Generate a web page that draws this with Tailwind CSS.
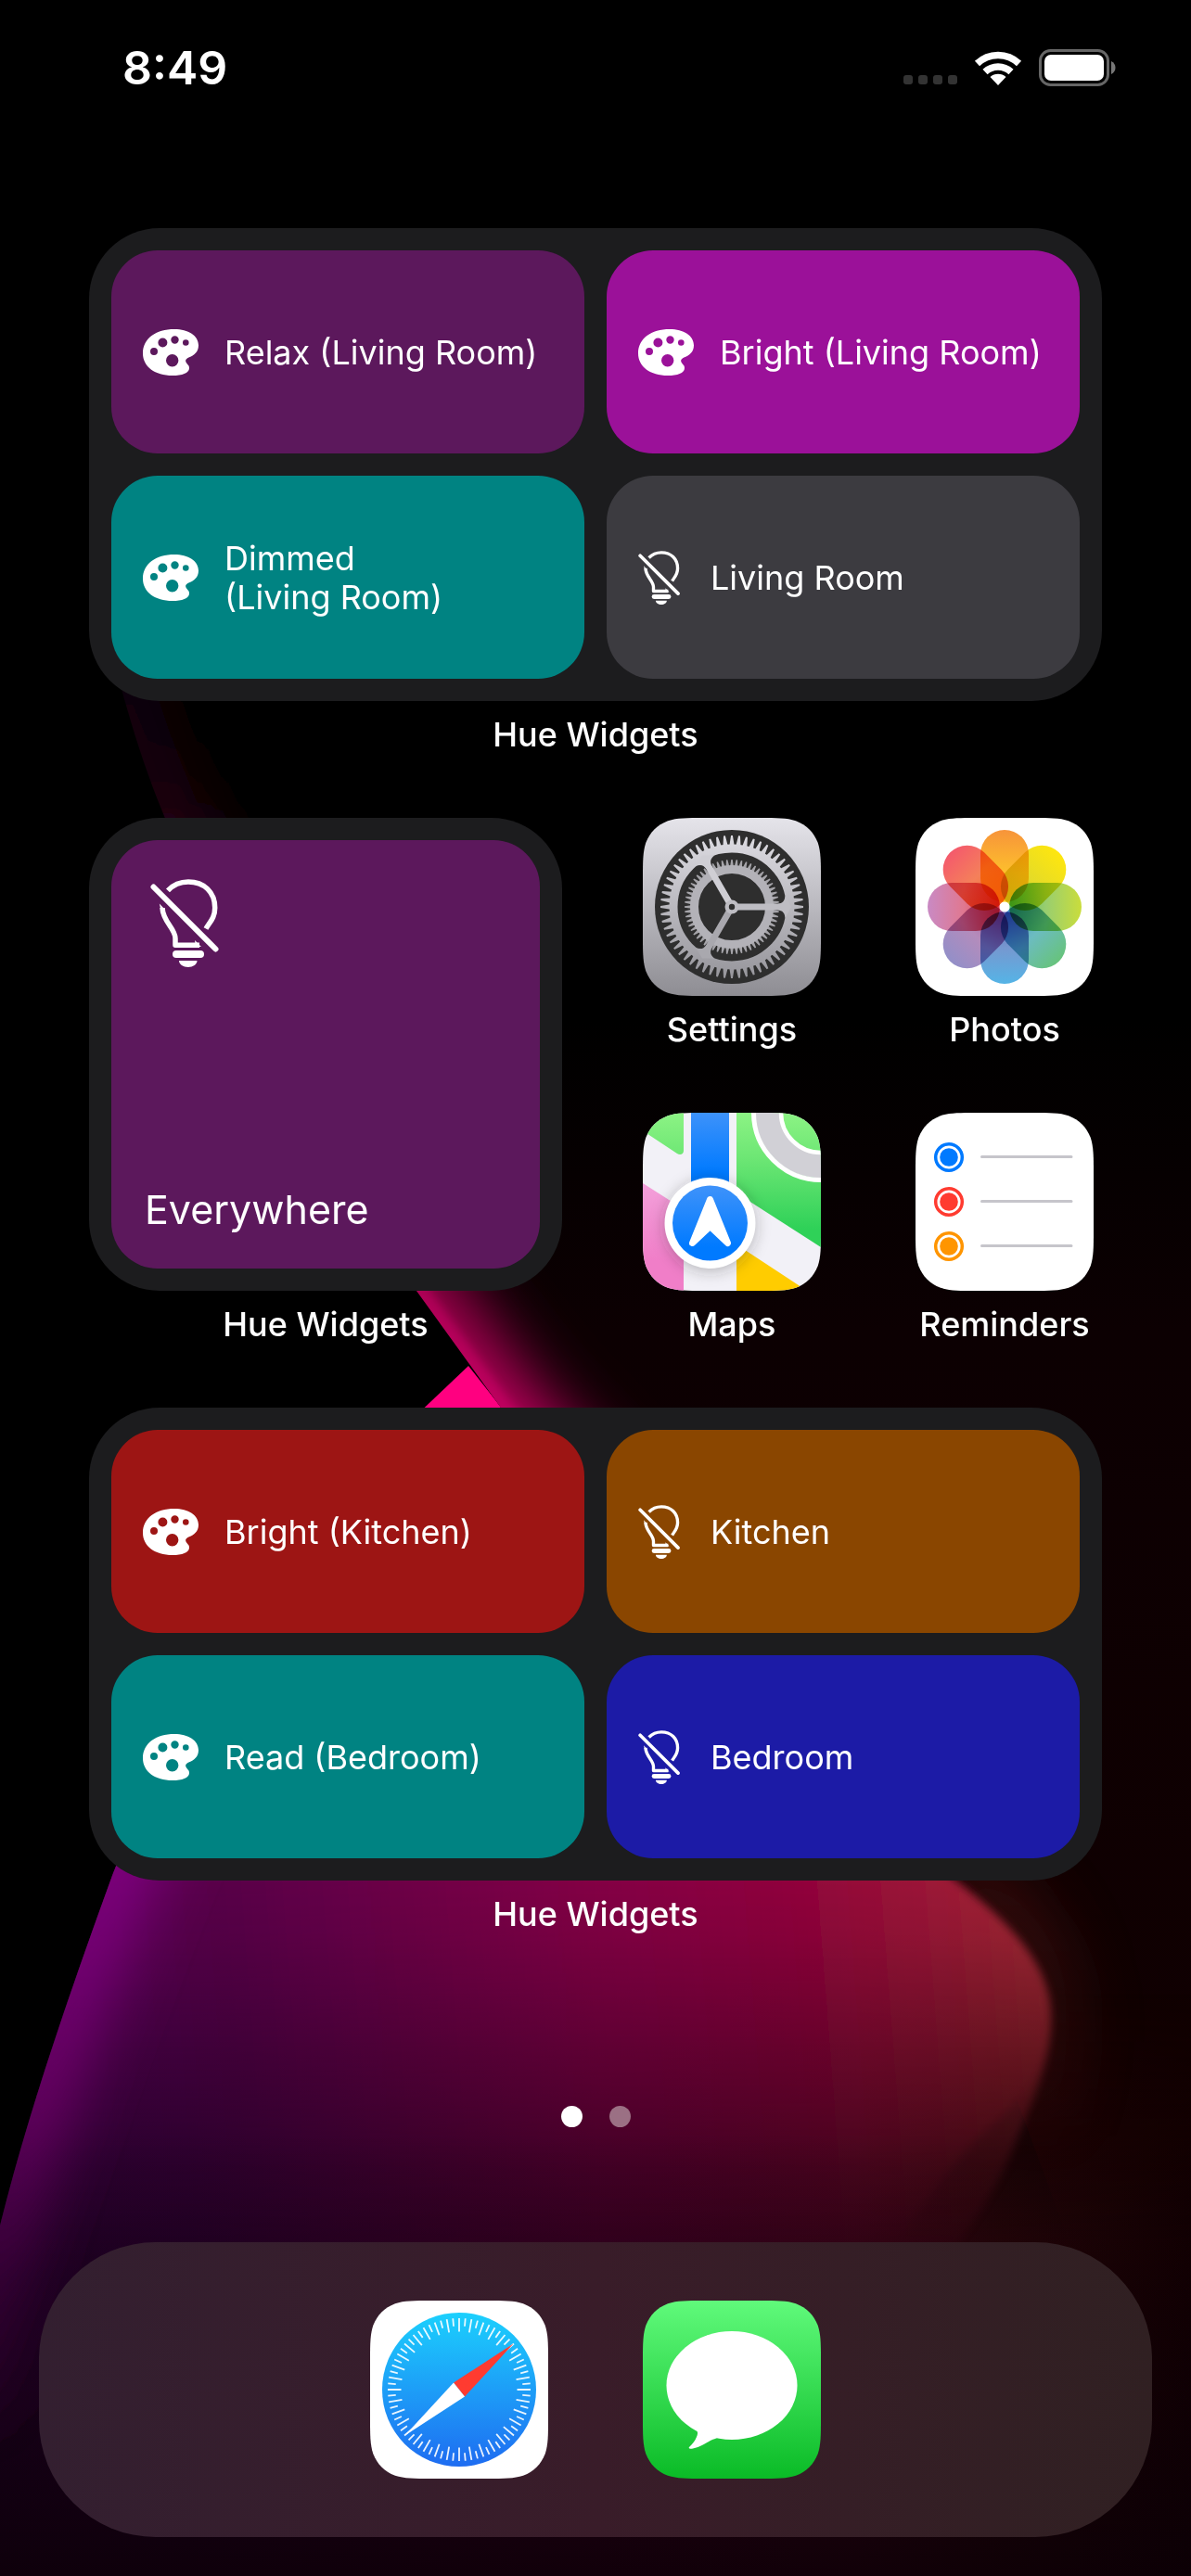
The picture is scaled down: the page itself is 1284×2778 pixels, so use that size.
<!DOCTYPE html>
<html lang="en">
<head>
    <meta charset="UTF-8">
    <meta name="viewport" content="width=device-width, initial-scale=1.0">
    <title>Home Screen</title>
    <script src="https://cdn.jsdelivr.net/npm/@tailwindcss/browser@4"></script>
</head>
<body class="bg-black text-white font-['Inter','Liberation_Sans',sans-serif]">

    <!-- Shared icons -->
    <svg class="absolute size-0" aria-hidden="true">
        <symbol id="palette" viewBox="0 0 60 50">
            <path fill="currentColor" fill-rule="evenodd" d="M34 0C49 0 60 7 60 17.5C60 25 55 28 50 30.3C47 31.8 45.5 33 46.5 35.5C47.5 38 50 38.5 50 42C50 47.500 42 50 32 50C13 50 0 40.500 0 26C0 10 14 0 34 0ZM25 33.700a6.700 6.700 0 1 0 13.400 0a6.700 6.700 0 1 0 -13.400 0ZM8 24a4 4 0 1 0 8 0a4 4 0 1 0 -8 0ZM16.400 14.500a5 5 0 1 0 10 0a5 5 0 1 0 -10 0ZM30.300 11.500a4.200 4.200 0 1 0 8.400 0a4.200 4.200 0 1 0 -8.400 0ZM43 14.500a3.300 3.300 0 1 0 6.600 0a3.300 3.300 0 1 0 -6.600 0Z"/>
        </symbol>
        <symbol id="bulb-off" viewBox="0 0 74 95" preserveAspectRatio="xMinYMid">
            <g fill="none" stroke="currentColor" stroke-width="5.500">
                <path stroke-width="6" stroke-linecap="round" d="M3.500 8.500L70.500 75.500"/>
                <path d="M19 12.300C25 6 32 3 41 3C58 3 69.700 14 69.700 31C69.700 42 64 46.500 60 53.500"/>
                <path stroke-linejoin="round" d="M13 31C13.500 46 27 53 27 64V71.200H53"/>
            </g>
            <path fill="currentColor" d="M9.800 26.500L16 33L12 36ZM48 66L55 73H49Z"/>
            <rect x="24" y="77" width="34" height="8" rx="4" fill="currentColor"/>
            <path fill="currentColor" d="M31 88H50.500C50.500 92 46 95 40.800 95S31 92 31 88Z"/>
        </symbol>
        <clipPath id="squircle">
            <path d="M66 0H126C145 0 155 0 165 3.200C177 8 184 15 188.800 27C192 37 192 47 192 66V126C192 145 192 155 188.800 165C184 177 177 184 165 188.800C155 192 145 192 126 192H66C47 192 37 192 27 188.800C15 184 8 177 3.200 165C0 155 0 145 0 126V66C0 47 0 37 3.200 27C8 15 15 8 27 3.200C37 0 47 0 66 0Z"/>
        </clipPath>
    </svg>

    <div class="relative isolate flex min-h-screen flex-col overflow-hidden">

        <!-- Wallpaper -->
        <svg class="absolute inset-0 -z-10 h-full w-full" viewBox="0 0 1284 2778" preserveAspectRatio="none" aria-hidden="true">
            <defs>
                <linearGradient id="back" x1="0" y1="1100" x2="0" y2="2778" gradientUnits="userSpaceOnUse">
                    <stop offset="0" stop-color="#000"/>
                    <stop offset=".2" stop-color="#0c0002"/>
                    <stop offset="1" stop-color="#130001"/>
                </linearGradient>
                <linearGradient id="ridge" x1="0" y1="640" x2="0" y2="1560" gradientUnits="userSpaceOnUse">
                    <stop offset="0" stop-color="#000"/>
                    <stop offset=".26" stop-color="#240012"/>
                    <stop offset=".82" stop-color="#b00056"/>
                    <stop offset="1" stop-color="#d8006c"/>
                </linearGradient>
                <linearGradient id="front" x1="100" y1="2100" x2="1130" y2="2020" gradientUnits="userSpaceOnUse">
                    <stop offset="0" stop-color="#5e0058"/>
                    <stop offset=".13" stop-color="#5e004e"/>
                    <stop offset=".52" stop-color="#8c004a"/>
                    <stop offset=".72" stop-color="#9a0042"/>
                    <stop offset=".84" stop-color="#a6143c"/>
                    <stop offset="1" stop-color="#b4303a"/>
                </linearGradient>
                <linearGradient id="floor" x1="0" y1="0" x2="1284" y2="0" gradientUnits="userSpaceOnUse">
                    <stop offset="0" stop-color="#200028"/>
                    <stop offset=".16" stop-color="#220026"/>
                    <stop offset=".5" stop-color="#360020"/>
                    <stop offset=".72" stop-color="#360416"/>
                    <stop offset=".84" stop-color="#260508"/>
                    <stop offset="1" stop-color="#130001"/>
                </linearGradient>
                <linearGradient id="shade" x1="0" y1="2300" x2="0" y2="2778" gradientUnits="userSpaceOnUse">
                    <stop offset="0" stop-color="#0b0008" stop-opacity="0"/>
                    <stop offset="1" stop-color="#0b0006" stop-opacity=".85"/>
                </linearGradient>
                <linearGradient id="rim" x1="0" y1="2000" x2="0" y2="2778" gradientUnits="userSpaceOnUse">
                    <stop offset="0" stop-color="#8c0090"/>
                    <stop offset=".35" stop-color="#74006e"/>
                    <stop offset=".6" stop-color="#3c003a"/>
                    <stop offset="1" stop-color="#100010"/>
                </linearGradient>
                <linearGradient id="fadeDown" x1="0" y1="1960" x2="0" y2="2460" gradientUnits="userSpaceOnUse">
                    <stop offset="0" stop-color="#fff"/>
                    <stop offset=".25" stop-color="#ccc"/>
                    <stop offset=".5" stop-color="#7a7a7a"/>
                    <stop offset=".75" stop-color="#2c2c2c"/>
                    <stop offset="1" stop-color="#000"/>
                </linearGradient>
                <linearGradient id="fadeUp" x1="0" y1="2150" x2="0" y2="2420" gradientUnits="userSpaceOnUse">
                    <stop offset="0" stop-color="#000"/>
                    <stop offset="1" stop-color="#fff"/>
                </linearGradient>
                <mask id="fadeMask" maskUnits="userSpaceOnUse" x="0" y="0" width="1284" height="2778">
                    <rect width="1284" height="2778" fill="url(#fadeDown)"/>
                </mask>
                <mask id="floorMask" maskUnits="userSpaceOnUse" x="0" y="0" width="1284" height="2778">
                    <rect width="1284" height="2778" fill="url(#fadeUp)"/>
                    <path d="M-100 1850V2600H850C960 2420 1020 2340 1060 2300C1110 2260 1133 2220 1133 2175C1133 2120 1090 2075 1030 2028L800 1850Z" fill="#fff" filter="url(#blurSmall)"/>
                </mask>
                <filter id="blurSmall" filterUnits="userSpaceOnUse" x="-200" y="0" width="1700" height="3000"><feGaussianBlur stdDeviation="5"/></filter>
                <filter id="blurLarge" filterUnits="userSpaceOnUse" x="-200" y="0" width="1700" height="3000"><feGaussianBlur stdDeviation="36"/></filter>
                <clipPath id="backClip"><path d="M85 540C115 690 140 790 175 875C260 1090 350 1240 449 1392L540 1518L1000 2000L1284 2778V540Z"/></clipPath>
                <clipPath id="frontClip"><path d="M122 2020C60 2190 25 2300 0 2400V2778H1284V1900H170Z"/></clipPath>
            </defs>
            <rect width="1284" height="2778" fill="#000"/>
            <path d="M505 1473L550 1530H445Z" fill="#ff0080"/>
            <g clip-path="url(#backClip)">
                <path d="M0 540H1284V2778H0Z" fill="url(#back)"/>
                <path d="M75 540C105 690 135 790 170 875C255 1090 345 1240 444 1392L540 1525L700 1700" fill="none" stroke="url(#ridge)" stroke-width="84" filter="url(#blurLarge)"/>
                <path d="M400 1330L449 1392L540 1518L700 1700" fill="none" stroke="#ff0080" stroke-opacity=".3" stroke-width="24" filter="url(#blurSmall)"/>
            </g>
            <path d="M1000 2000L1284 2778V1990Z" fill="url(#back)"/>
            <g clip-path="url(#frontClip)">
                <rect y="1900" width="1284" height="878" fill="url(#floor)" mask="url(#floorMask)"/>
                <g mask="url(#fadeMask)">
                    <path d="M1020 2015C1110 2080 1150 2130 1110 2290" fill="none" stroke="#c83c3c" stroke-opacity=".3" stroke-width="60" filter="url(#blurLarge)"/>
                    <path d="M-100 1850V2600H900C1000 2460 1060 2400 1095 2310C1120 2250 1133 2220 1133 2175C1133 2120 1090 2075 1030 2028L800 1850Z" fill="url(#front)" filter="url(#blurSmall)"/>
                </g>
                <rect y="2300" width="1284" height="478" fill="url(#shade)"/>
                <path d="M160 1930L125 2015C60 2190 25 2300 0 2400L-40 2600" fill="none" stroke="url(#rim)" stroke-width="64" filter="url(#blurLarge)"/>
            </g>
        </svg>

        <!-- Status bar -->
        <header class="flex items-center justify-between pt-10 pr-20 pl-[132px]">
            <time class="text-[50px] leading-[66px] font-semibold">8:49</time>
            <div class="flex items-center gap-[18px]">
                <div class="flex gap-[6px] pt-[26px]">
                    <span class="size-[10px] rounded-[3px] bg-[#333]"></span>
                    <span class="size-[10px] rounded-[3px] bg-[#333]"></span>
                    <span class="size-[10px] rounded-[3px] bg-[#333]"></span>
                    <span class="size-[10px] rounded-[3px] bg-[#333]"></span>
                </div>
                <svg class="h-[38px] w-[52px]" viewBox="0 0 52 38" role="img" aria-label="Wi-Fi">
                    <g fill="none" stroke="#fff" stroke-width="7.500">
                        <path d="M3.500 14.500A32.500 32.500 0 0 1 48.500 14.500"/>
                        <path d="M12 23.500A20.500 20.500 0 0 1 40 23.500"/>
                    </g>
                    <path fill="#fff" d="M26 38L17.500 29A13 13 0 0 1 34.500 29Z"/>
                </svg>
                <svg class="h-[40px] w-[84px]" viewBox="0 0 84 40" role="img" aria-label="Battery">
                    <rect x="1.500" y="1.500" width="73" height="37" rx="11" fill="none" stroke="#666" stroke-width="3"/>
                    <rect x="6" y="6" width="64" height="28" rx="7" fill="#fff"/>
                    <path d="M78 13C81 14.500 82.500 17 82.500 20S81 25.500 78 27Z" fill="#777"/>
                </svg>
            </div>
        </header>

        <main class="grid grid-cols-4 gap-y-[66px] px-[54px] pt-[140px]">

            <section class="col-span-4 flex flex-col gap-3 px-[42px]">
                <div class="grid grid-cols-2 gap-6 rounded-[76px] bg-[#1c1c1e] p-6">
                    <button class="flex h-[219px] items-center gap-7 rounded-[50px] bg-[#5c185c] pr-4 pl-[34px] text-left text-4xl/[42px]">
                        <svg class="h-[50px] w-[60px] shrink-0"><use href="#palette"/></svg>
                        <span>Relax (Living Room)</span>
                    </button>
                    <button class="flex h-[219px] items-center gap-7 rounded-[50px] bg-[#9b1199] pr-4 pl-[34px] text-left text-4xl/[42px]">
                        <svg class="h-[50px] w-[60px] shrink-0"><use href="#palette"/></svg>
                        <span>Bright (Living Room)</span>
                    </button>
                    <button class="flex h-[219px] items-center gap-7 rounded-[50px] bg-[#008382] pr-4 pl-[34px] text-left text-4xl/[42px]">
                        <svg class="h-[50px] w-[60px] shrink-0"><use href="#palette"/></svg>
                        <span>Dimmed<br>(Living Room)</span>
                    </button>
                    <button class="flex h-[219px] items-center gap-7 rounded-[50px] bg-[#3c3b40] pr-4 pl-[34px] text-left text-4xl/[42px]">
                        <svg class="h-[58px] w-[50px] shrink-0"><use href="#bulb-off"/></svg>
                        <span>Living Room</span>
                    </button>
                </div>
                <h2 class="text-center text-4xl/[48px] font-medium">Hue Widgets</h2>
            </section>

            <section class="col-span-2 row-span-2 flex flex-col gap-3 pr-9 pl-[42px]">
                <div class="aspect-square rounded-[76px] bg-[#1c1c1e] p-6">
                    <button class="flex h-full w-full flex-col items-start justify-between rounded-[50px] bg-[#5c185c] pt-[42px] pb-[38px] pl-9 text-left text-[43px] leading-[52px]">
                        <svg class="ml-1.5 h-[95px] w-[74px]"><use href="#bulb-off"/></svg>
                        <span>Everywhere</span>
                    </button>
                </div>
                <h2 class="text-center text-4xl/[48px] font-medium">Hue Widgets</h2>
            </section>

            <a href="#settings" class="flex flex-col items-center gap-3 text-4xl/[48px] font-medium">
                <svg class="size-48" viewBox="0 0 192 192" aria-hidden="true">
                    <defs>
                        <linearGradient id="metal" x1="0" y1="0" x2="0" y2="192" gradientUnits="userSpaceOnUse">
                            <stop offset="0" stop-color="#e5e4ea"/>
                            <stop offset="1" stop-color="#8e8d93"/>
                        </linearGradient>
                    </defs>
                    <g clip-path="url(#squircle)">
                        <rect width="192" height="192" fill="url(#metal)"/>
                        <circle cx="96" cy="96" r="83" fill="#2e2e2e"/>
                        <path id="outerTeeth" fill="url(#metal)"/>
                        <circle cx="96" cy="96" r="63" fill="none" stroke="url(#metal)" stroke-width="9"/>
                        <path id="innerTeeth" fill="#a5a4a9"/>
                        <circle cx="96" cy="96" r="40.500" fill="none" stroke="#b3b2b8" stroke-width="9"/>
                        <!-- spokes -->
                        <path d="M96 92.500H145C151 92.500 153 89 153.500 84L160 96L153.500 108C153 103 151 99.500 145 99.500H96Z" fill="#bebdc3"/>
                        <path d="M96 92.500H145C151 92.500 153 89 153.500 84L160 96L153.500 108C153 103 151 99.500 145 99.500H96Z" fill="#a9a8ae" transform="rotate(120 96 96)"/>
                        <path d="M96 92.500H145C151 92.500 153 89 153.500 84L160 96L153.500 108C153 103 151 99.500 145 99.500H96Z" fill="#cfced4" transform="rotate(240 96 96)"/>
                        <circle cx="96" cy="96" r="7.500" fill="#bebdc3"/>
                        <circle cx="96" cy="96" r="3.200" fill="#2e2e2e"/>
                    </g>
                </svg>
                <span>Settings</span>
            </a>

            <a href="#photos" class="flex flex-col items-center gap-3 text-4xl/[48px] font-medium">
                <svg class="size-48" viewBox="0 0 192 192" aria-hidden="true">
                    <defs>
                        <linearGradient id="p1" x1="0" y1="0" x2="0" y2="1"><stop offset="0" stop-color="#f7943a"/><stop offset=".6" stop-color="#fdc02c"/><stop offset="1" stop-color="#fdd020"/></linearGradient>
                        <linearGradient id="p2" x1="0" y1="0" x2="0" y2="1"><stop offset="0" stop-color="#fee60f"/><stop offset="1" stop-color="#cfd23c"/></linearGradient>
                        <linearGradient id="p3" x1="0" y1="0" x2="0" y2="1"><stop offset="0" stop-color="#cadd3c"/><stop offset=".5" stop-color="#98ce70"/><stop offset="1" stop-color="#48b460"/></linearGradient>
                        <linearGradient id="p4" x1="0" y1="0" x2="0" y2="1"><stop offset="0" stop-color="#67c37c"/><stop offset=".5" stop-color="#6cbcc0"/><stop offset="1" stop-color="#4a90d0"/></linearGradient>
                        <linearGradient id="p5" x1="0" y1="0" x2="0" y2="1"><stop offset="0" stop-color="#55b4e6"/><stop offset=".5" stop-color="#7698d0"/><stop offset="1" stop-color="#6a60b0"/></linearGradient>
                        <linearGradient id="p6" x1="0" y1="0" x2="0" y2="1"><stop offset="0" stop-color="#938fc8"/><stop offset=".5" stop-color="#b48cbc"/><stop offset="1" stop-color="#b45a98"/></linearGradient>
                        <linearGradient id="p7" x1="0" y1="0" x2="0" y2="1"><stop offset="0" stop-color="#c98ac4"/><stop offset=".5" stop-color="#e07890"/><stop offset="1" stop-color="#dc3848"/></linearGradient>
                        <linearGradient id="p8" x1="0" y1="0" x2="0" y2="1"><stop offset="0" stop-color="#f45a6c"/><stop offset=".5" stop-color="#f4805a"/><stop offset="1" stop-color="#f47020"/></linearGradient>
                    </defs>
                    <g clip-path="url(#squircle)">
                        <rect width="192" height="192" fill="#fff"/>
                        <g class="isolate *:mix-blend-multiply">
                            <rect x="70" y="13" width="52" height="78" rx="26" fill="url(#p1)"/>
                            <rect x="70" y="13" width="52" height="78" rx="26" fill="url(#p2)" transform="rotate(45 96 96)"/>
                            <rect x="70" y="13" width="52" height="78" rx="26" fill="url(#p3)" transform="rotate(90 96 96)"/>
                            <rect x="70" y="13" width="52" height="78" rx="26" fill="url(#p4)" transform="rotate(135 96 96)"/>
                            <rect x="70" y="13" width="52" height="78" rx="26" fill="url(#p5)" transform="rotate(180 96 96)"/>
                            <rect x="70" y="13" width="52" height="78" rx="26" fill="url(#p6)" transform="rotate(225 96 96)"/>
                            <rect x="70" y="13" width="52" height="78" rx="26" fill="url(#p7)" transform="rotate(270 96 96)"/>
                            <rect x="70" y="13" width="52" height="78" rx="26" fill="url(#p8)" transform="rotate(315 96 96)"/>
                        </g>
                        <circle cx="96" cy="96" r="5.500" fill="#fff"/>
                    </g>
                </svg>
                <span>Photos</span>
            </a>

            <a href="#maps" class="flex flex-col items-center gap-3 text-4xl/[48px] font-medium">
                <svg class="size-48" viewBox="0 0 192 192" aria-hidden="true">
                    <defs>
                        <linearGradient id="park" x1="0" y1="0" x2="0" y2="125" gradientUnits="userSpaceOnUse"><stop offset="0" stop-color="#8cf384"/><stop offset=".4" stop-color="#6ce674"/><stop offset="1" stop-color="#2fd158"/></linearGradient>
                        <linearGradient id="road" x1="0" y1="0" x2="0" y2="65" gradientUnits="userSpaceOnUse"><stop offset="0" stop-color="#3d92fa"/><stop offset="1" stop-color="#007aff"/></linearGradient>
                        <linearGradient id="block" x1="0" y1="76" x2="0" y2="160" gradientUnits="userSpaceOnUse"><stop offset="0" stop-color="#f3a0da"/><stop offset="1" stop-color="#f07ec8"/></linearGradient>
                        <linearGradient id="pin" x1="0" y1="80" x2="0" y2="145" gradientUnits="userSpaceOnUse"><stop offset="0" stop-color="#3d92fa"/><stop offset="1" stop-color="#007aff"/></linearGradient>
                        <filter id="soft" x="-30%" y="-30%" width="160%" height="160%"><feGaussianBlur stdDeviation="8"/></filter>
                    </defs>
                    <g clip-path="url(#squircle)">
                        <rect width="192" height="192" fill="#f2f1f7"/>
                        <path d="M0 0H44V41C44 45 40 46 37 44L0 19.500Z" fill="url(#park)"/>
                        <rect x="52" width="41" height="90" fill="url(#road)"/>
                        <path d="M101 0H192V145L101 86.500Z" fill="url(#park)"/>
                        <circle cx="192" cy="0" r="57.500" fill="none" stroke="#d1d0d6" stroke-width="26"/>
                        <circle cx="192" cy="0" r="72.500" fill="none" stroke="#fff" stroke-width="5"/>
                        <circle cx="192" cy="0" r="43" fill="none" stroke="#fff" stroke-width="4.500"/>
                        <path d="M0 76L44 104V192H0Z" fill="url(#block)"/>
                        <path d="M101 142L177 192H101Z" fill="#fc0"/>
                        <circle cx="72.500" cy="122" r="49" fill="#333" fill-opacity=".3" filter="url(#soft)"/>
                        <circle cx="72.500" cy="119" r="49" fill="#fff"/>
                        <circle cx="72.500" cy="119" r="40.500" fill="url(#pin)"/>
                        <path d="M72.500 93.500L53.500 140.500L72.500 122.500L91.500 140.500Z" fill="#fff" stroke="#fff" stroke-width="7" stroke-linejoin="round"/>
                    </g>
                </svg>
                <span>Maps</span>
            </a>

            <a href="#reminders" class="flex flex-col items-center gap-3 text-4xl/[48px] font-medium">
                <svg class="size-48" viewBox="0 0 192 192" aria-hidden="true">
                    <g clip-path="url(#squircle)">
                        <rect width="192" height="192" fill="#fff"/>
                        <g fill="none" stroke-width="3.500">
                            <circle cx="36" cy="48" r="14.300" stroke="#007aff"/>
                            <circle cx="36" cy="96" r="14.300" stroke="#ff3b30"/>
                            <circle cx="36" cy="144" r="14.300" stroke="#ff9500"/>
                        </g>
                        <circle cx="36" cy="48" r="9.800" fill="#007aff"/>
                        <circle cx="36" cy="96" r="9.800" fill="#ff3b30"/>
                        <circle cx="36" cy="144" r="9.800" fill="#ff9500"/>
                        <path d="M71.500 47.500H168M71.500 95.500H168M71.500 143.500H168" stroke="#c6c5cb" stroke-width="3" stroke-linecap="round"/>
                    </g>
                </svg>
                <span>Reminders</span>
            </a>

            <section class="col-span-4 flex flex-col gap-3 px-[42px]">
                <div class="grid grid-cols-2 gap-6 rounded-[76px] bg-[#1c1c1e] p-6">
                    <button class="flex h-[219px] items-center gap-7 rounded-[50px] bg-[#9d1514] pr-4 pl-[34px] text-left text-4xl/[42px]">
                        <svg class="h-[50px] w-[60px] shrink-0"><use href="#palette"/></svg>
                        <span>Bright (Kitchen)</span>
                    </button>
                    <button class="flex h-[219px] items-center gap-7 rounded-[50px] bg-[#8a4600] pr-4 pl-[34px] text-left text-4xl/[42px]">
                        <svg class="h-[58px] w-[50px] shrink-0"><use href="#bulb-off"/></svg>
                        <span>Kitchen</span>
                    </button>
                    <button class="flex h-[219px] items-center gap-7 rounded-[50px] bg-[#008382] pr-4 pl-[34px] text-left text-4xl/[42px]">
                        <svg class="h-[50px] w-[60px] shrink-0"><use href="#palette"/></svg>
                        <span>Read (Bedroom)</span>
                    </button>
                    <button class="flex h-[219px] items-center gap-7 rounded-[50px] bg-[#1c1ba6] pr-4 pl-[34px] text-left text-4xl/[42px]">
                        <svg class="h-[58px] w-[50px] shrink-0"><use href="#bulb-off"/></svg>
                        <span>Bedroom</span>
                    </button>
                </div>
                <h2 class="text-center text-4xl/[48px] font-medium">Hue Widgets</h2>
            </section>
        </main>

        <!-- Page dots -->
        <div class="mt-auto flex justify-center gap-[29px] pb-[124px]">
            <span class="size-[23px] rounded-full bg-white"></span>
            <span class="size-[23px] rounded-full bg-[#9b7084]"></span>
        </div>

        <!-- Dock -->
        <nav class="mx-[42px] mb-[42px] flex justify-center gap-[102px] rounded-[126px] bg-linear-to-r from-[#331f30] via-[#391c29] to-[#302022] py-[63px]">
            <a href="#safari" aria-label="Safari">
                <svg class="size-48" viewBox="0 0 192 192" aria-hidden="true">
                    <defs>
                        <linearGradient id="compass" x1="0" y1="0" x2="0" y2="1"><stop offset="0" stop-color="#1cd0fd"/><stop offset="1" stop-color="#1e6cf1"/></linearGradient>
                    </defs>
                    <g clip-path="url(#squircle)">
                        <rect width="192" height="192" fill="#fff"/>
                        <circle cx="96" cy="96" r="83" fill="url(#compass)"/>
                        <path id="ticks" fill="none" stroke="#fff" stroke-opacity=".9" stroke-width="1.800"/>
                        <path d="M154.500 46.500L90 88.500L102 103.500Z" fill="#ff3b30"/>
                        <path d="M37.500 145.500L90 88.500L102 103.500Z" fill="#fff"/>
                    </g>
                </svg>
            </a>
            <a href="#messages" aria-label="Messages">
                <svg class="size-48" viewBox="0 0 192 192" aria-hidden="true">
                    <defs>
                        <linearGradient id="mint" x1="0" y1="0" x2="0" y2="1"><stop offset="0" stop-color="#60fa7b"/><stop offset="1" stop-color="#0abb26"/></linearGradient>
                    </defs>
                    <g clip-path="url(#squircle)">
                        <rect width="192" height="192" fill="url(#mint)"/>
                        <ellipse cx="96" cy="91.500" rx="70.500" ry="58.500" fill="#fff"/>
                        <path d="M50 132C60 140 60 142 58 147C56 152 53 155 50 158C49 159.500 51 160 54 159.500C66 157 70 151 78 149L96 140Z" fill="#fff"/>
                    </g>
                </svg>
            </a>
        </nav>
    </div>

    <script>
        // point on a circle round the icon centre
        function polar(r, deg) {
            const a = deg * Math.PI / 180;
            return (96 + r * Math.cos(a)).toFixed(2) + ' ' + (96 + r * Math.sin(a)).toFixed(2);
        }

        // tapered gear teeth
        function teeth(count, rIn, rOut, wIn, wOut) {
            let d = '';
            for (let i = 0; i < count; i++) {
                const a = i * 360 / count;
                d += `M${polar(rIn, a - wIn)}L${polar(rOut, a - wOut)}L${polar(rOut, a + wOut)}L${polar(rIn, a + wIn)}Z`;
            }
            return d;
        }

        document.getElementById('outerTeeth').setAttribute('d', teeth(60, 66, 77, 2.3, 0.7));
        document.getElementById('innerTeeth').setAttribute('d', teeth(60, 44, 51, 2.4, 0.8));

        // compass ticks, long and short in turn
        let ticks = '';
        for (let i = 0; i < 72; i++) {
            ticks += `M${polar(i % 2 ? 68.5 : 62.5, i * 5)}L${polar(77, i * 5)}`;
        }
        document.getElementById('ticks').setAttribute('d', ticks);
    </script>
</body>
</html>
